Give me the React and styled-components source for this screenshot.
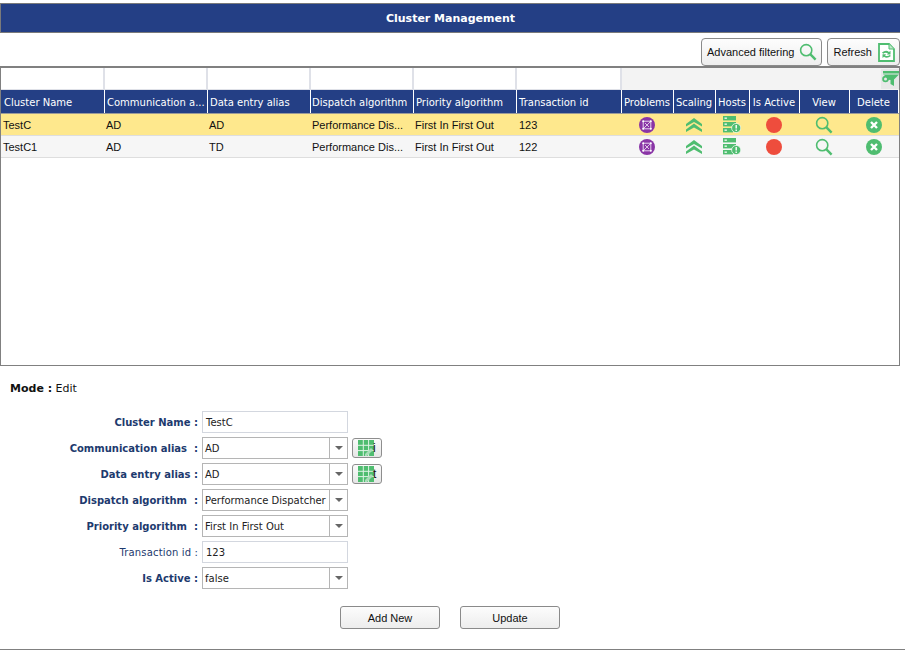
import React from 'react';
import styled, { createGlobalStyle } from 'styled-components';

const green = '#4fbd70';
const navy = '#243f85';
const columns = '104px 103px 103px 103px 103px 105px 52px 42px 34px 50px 50px 49px';

const GlobalStyle = createGlobalStyle`
	html, body {
		margin: 0;
		background: #fff;
	}
	body {
		font-family: 'Liberation Sans', Arial, sans-serif;
		overflow: hidden;
	}
`;

const Page = styled.div`
	width: 905px;
	height: 650px;
	padding-top: 3px;
	box-sizing: border-box;
	display: flex;
	flex-direction: column;
	border-bottom: 1px solid #808080;
`;

const TitleBar = styled.div`
	height: 30px;
	box-sizing: border-box;
	margin-right: 5px;
	background: ${navy};
	border: 1px solid #7a7a7a;
	border-width: 1px 0 1px 1px;
	color: #fff;
	font: bold 11px/30px 'DejaVu Sans', Verdana, sans-serif;
	text-align: center;
`;

const Toolbar = styled.div`
	height: 33px;
	padding: 5px 5px 0 0;
	box-sizing: border-box;
	display: flex;
	justify-content: flex-end;
	gap: 5px;
`;

const ToolButton = styled.div`
	height: 28px;
	box-sizing: border-box;
	padding: 0 4px 0 5px;
	display: flex;
	align-items: center;
	gap: ${(p) => p.$gap}px;
	border: 1px solid #8a8a8a;
	border-radius: 4px;
	background: linear-gradient(#fdfdfd, #eeeeee);
	font-size: 11px;
	color: #111;
`;

const Grid = styled.div`
	width: 900px;
	height: 300px;
	box-sizing: border-box;
	border: 1px solid #808080;
	border-top-width: 2px;
	background: #fff;
`;

const FilterRow = styled.div`
	display: grid;
	grid-template-columns: ${columns};
	height: 22px;
	background: #f3f3f3;
	position: relative;
`;

const FilterCell = styled.div`
	background: #fff;
	border-right: 2px solid #dfe1e8;
	border-bottom: 1px solid #dfe1e8;
	box-sizing: border-box;
`;

const FilterIcon = styled.div`
	position: absolute;
	right: 0;
	top: 1px;
	width: 18px;
	height: 20px;
	background: #e8e8e8;
	display: flex;
	align-items: center;
	justify-content: center;
`;

const HeaderRow = styled.div`
	display: grid;
	grid-template-columns: ${columns};
	height: 24px;
	border-bottom: 1px solid #9a9a9a;
	box-sizing: border-box;
`;

const HeaderCell = styled.div`
	background: ${navy};
	border-right: 1px solid #fff;
	box-sizing: border-box;
	color: #fff;
	font: 10px/26px 'DejaVu Sans', Verdana, sans-serif;
	padding-left: ${(p) => (p.$center ? 0 : `${p.$pad}px`)};
	padding-right: ${(p) => (p.$center ? '1px' : 0)};
	text-align: ${(p) => (p.$center ? 'center' : 'left')};
	white-space: nowrap;
	overflow: hidden;
`;

const Row = styled.div`
	display: grid;
	grid-template-columns: ${columns};
	height: 22px;
	box-sizing: border-box;
	border-bottom: 1px solid #dedede;
	background: ${(p) => (p.$selected ? '#fee88d' : '#f6f6f6')};
`;

const Cell = styled.div`
	font-size: 11px;
	line-height: 22px;
	color: #111;
	padding-left: ${(p) => p.$pad}px;
	white-space: nowrap;
	overflow: hidden;
`;

const IconCell = styled.div`
	display: flex;
	align-items: center;
	justify-content: center;
	padding-right: 2px;
`;

const ModeLine = styled.div`
	margin: 16px 0 0 10px;
	font: 11px/14px 'DejaVu Sans', Verdana, sans-serif;
	color: #111;
	b {
		font-weight: bold;
	}
`;

const Form = styled.div`
	margin-top: 15px;
	display: flex;
	flex-direction: column;
	gap: 4px;
`;

const FormRow = styled.div`
	display: grid;
	grid-template-columns: 198px 146px auto;
	column-gap: 4px;
	height: 22px;
	align-items: start;
`;

const Label = styled.div`
	text-align: right;
	font: ${(p) => (p.$plain ? 'normal' : 'bold')} 10px/24px 'DejaVu Sans', Verdana, sans-serif;
	letter-spacing: ${(p) => (p.$plain ? '0.15px' : 0)};
	color: #1d3a6e;
	white-space: pre;
`;

const TextBox = styled.div`
	height: 22px;
	box-sizing: border-box;
	border: 1px solid #d3d7df;
	padding-left: 3px;
	font: 10px/22px 'DejaVu Sans', Verdana, sans-serif;
	color: #222;
`;

const SelectBox = styled.div`
	height: 22px;
	box-sizing: border-box;
	border: 1px solid #b5b5b5;
	display: flex;
	font: 10px/22px 'DejaVu Sans', Verdana, sans-serif;
	color: #222;
`;

const SelectText = styled.div`
	flex: 1;
	padding-left: 2px;
	white-space: nowrap;
	overflow: hidden;
`;

const SelectArrow = styled.div`
	width: 17px;
	border-left: 1px solid #b5b5b5;
	display: flex;
	align-items: center;
	justify-content: center;
	&::before {
		content: '';
		border-style: solid;
		border-width: 4px 4px 0;
		border-color: #666 transparent transparent;
	}
`;

const LookupButton = styled.div`
	width: 30px;
	height: 20px;
	margin-top: 1px;
	box-sizing: border-box;
	border: 1px solid #8e8e8e;
	border-radius: 3px;
	background: linear-gradient(#fbfbfb, #e6e6e6);
	display: flex;
	align-items: center;
	padding-left: 5px;
	position: relative;
`;

const LookupGlyph = styled.span`
	position: absolute;
	left: 20px;
	top: 1px;
	font-size: 12px;
	line-height: 16px;
	color: #111;
`;

const Actions = styled.div`
	margin-top: 17px;
	padding-left: 340px;
	display: flex;
	gap: 20px;
`;

const ActionButton = styled.div`
	width: 100px;
	height: 23px;
	box-sizing: border-box;
	border: 1px solid #8a8a8a;
	border-radius: 3px;
	background: linear-gradient(#fcfcfc, #ededed);
	font-size: 11px;
	line-height: 22px;
	text-align: center;
	color: #111;
`;

const SearchIcon = ({ size = 18 }) => (
	<svg width={size} height={size} viewBox="0 0 18 18" fill="none" stroke={green}>
		<circle cx="7.2" cy="7.2" r="5.6" strokeWidth="1.6" />
		<path d="M11.2 11.2 L16.6 16.6" strokeWidth="2.4" />
	</svg>
);

const RefreshIcon = () => (
	<svg width="17" height="19" viewBox="0 0 17 19">
		<path d="M1 1 H11 L16 6 V18 H1 Z" fill="#fff" stroke={green} strokeWidth="1.8" />
		<path d="M11 1 V6 H16" fill="#bfe8cb" stroke={green} strokeWidth="1" />
		<path d="M4 9.5 Q8 6.5 11 9 L12.5 7.8 V11.5 H8.8 L10 10.4 Q7.5 9 5.2 10.8 Z" fill={green} />
		<path d="M13 13 Q9 16 6 13.8 L4.5 15 V11.3 H8.2 L7 12.4 Q9.5 14 11.8 12 Z" fill={green} />
	</svg>
);

const FunnelIcon = () => (
	<svg width="17" height="16" viewBox="0 0 17 16">
		<path d="M1 0 H17 V2.5 H1 Z" fill={green} />
		<path d="M1 3.5 H17 L12 8.5 V15 L8.5 13 V8.5 Z" fill={green} />
		<circle cx="3.5" cy="8" r="2.4" fill="#e8e8e8" stroke={green} strokeWidth="1.8" />
		<path d="M5.5 8 H9" stroke={green} strokeWidth="1.8" />
	</svg>
);

const ProblemsIcon = () => (
	<svg width="16" height="16" viewBox="0 0 16 16">
		<circle cx="8" cy="8" r="8" fill="#8a35a6" />
		<rect x="4.2" y="4.2" width="7.6" height="7.6" fill="none" stroke="#e6d3ee" strokeWidth="1" />
		<path d="M4.2 11.8 L11.8 4.2 M6 6 L10 10" stroke="#e6d3ee" strokeWidth="0.9" />
		<circle cx="4.2" cy="4.2" r="1" fill="#fff" />
		<circle cx="11.8" cy="4.2" r="1" fill="#fff" />
		<circle cx="4.2" cy="11.8" r="1" fill="#fff" />
		<circle cx="11.8" cy="11.8" r="1" fill="#fff" />
	</svg>
);

const ScalingIcon = () => (
	<svg width="16" height="14" viewBox="0 0 16 14" fill={green}>
		<path d="M8 0 L16 6 V8.4 L8 4 L0 8.4 V6 Z" />
		<path d="M8 5.4 L16 11.4 V14 L8 9.4 L0 14 V11.4 Z" />
	</svg>
);

const HostsIcon = () => (
	<svg width="18" height="17" viewBox="0 0 18 17">
		<rect x="0" y="0" width="13" height="4.4" fill={green} />
		<rect x="0" y="6" width="13" height="4.4" fill={green} />
		<rect x="0" y="12" width="10" height="4.4" fill={green} />
		<rect x="1.5" y="1.4" width="2.4" height="1.6" fill="#d8f0de" />
		<rect x="1.5" y="7.4" width="2.4" height="1.6" fill="#d8f0de" />
		<rect x="1.5" y="13.4" width="2.4" height="1.6" fill="#d8f0de" />
		<circle cx="13.2" cy="12" r="4.6" fill={green} stroke="#fff" strokeWidth="0.7" />
		<path d="M13.2 9 V12.6 M13.2 13.6 V15" stroke="#fff" strokeWidth="1.4" />
	</svg>
);

const ActiveIcon = () => (
	<svg width="16" height="16" viewBox="0 0 16 16">
		<circle cx="8" cy="8" r="8" fill="#ee4d3d" />
	</svg>
);

const DeleteIcon = () => (
	<svg width="16" height="16" viewBox="0 0 16 16">
		<circle cx="8" cy="8" r="8" fill={green} />
		<path d="M5 5 L11 11 M11 5 L5 11" stroke="#fff" strokeWidth="2.4" />
	</svg>
);

const TableIcon = () => (
	<svg width="16" height="16" viewBox="0 0 16 16">
		<rect width="16" height="16" fill={green} />
		<path d="M5.3 0 V16 M10.6 0 V16 M0 5.3 H16 M0 10.6 H16" stroke="#dff3e5" strokeWidth="1" />
		<path d="M7 14 L13 8 L15 10 L9 16 H7 Z" fill="#a9dcb8" />
	</svg>
);

const headers = [
	{ text: 'Cluster Name', pad: 3 },
	{ text: 'Communication a...', pad: 2 },
	{ text: 'Data entry alias', pad: 2 },
	{ text: 'Dispatch algorithm', pad: 1 },
	{ text: 'Priority algorithm', pad: 2 },
	{ text: 'Transaction id', pad: 2 },
];
const iconHeaders = ['Problems', 'Scaling', 'Hosts', 'Is Active', 'View', 'Delete'];

const rows = [
	{ name: 'TestC', comm: 'AD', entry: 'AD', id: '123', selected: true },
	{ name: 'TestC1', comm: 'AD', entry: 'TD', id: '122', selected: false },
];

const FormField = ({ label, plain, children, lookup }) => (
	<FormRow>
		<Label $plain={plain}>{label}</Label>
		{children}
		{lookup && (
			<LookupButton>
				<TableIcon />
				<LookupGlyph>{lookup}</LookupGlyph>
			</LookupButton>
		)}
	</FormRow>
);

const Select = ({ value }) => (
	<SelectBox>
		<SelectText>{value}</SelectText>
		<SelectArrow />
	</SelectBox>
);

export default function App() {
	return (
		<Page>
			<GlobalStyle />
			<TitleBar>Cluster Management</TitleBar>
			<Toolbar>
				<ToolButton $gap={5}>
					Advanced filtering
					<SearchIcon />
				</ToolButton>
				<ToolButton $gap={6}>
					Refresh
					<RefreshIcon />
				</ToolButton>
			</Toolbar>
			<Grid>
				<FilterRow>
					{headers.map((h) => (
						<FilterCell key={h.text} />
					))}
					<FilterIcon>
						<FunnelIcon />
					</FilterIcon>
				</FilterRow>
				<HeaderRow>
					{headers.map((h) => (
						<HeaderCell key={h.text} $pad={h.pad}>
							{h.text}
						</HeaderCell>
					))}
					{iconHeaders.map((h) => (
						<HeaderCell key={h} $center>
							{h}
						</HeaderCell>
					))}
				</HeaderRow>
				{rows.map((r) => (
					<Row key={r.name} $selected={r.selected}>
						<Cell $pad={2}>{r.name}</Cell>
						<Cell $pad={1}>{r.comm}</Cell>
						<Cell $pad={1}>{r.entry}</Cell>
						<Cell $pad={1}>Performance Dis...</Cell>
						<Cell $pad={1}>First In First Out</Cell>
						<Cell $pad={2}>{r.id}</Cell>
						<IconCell><ProblemsIcon /></IconCell>
						<IconCell><ScalingIcon /></IconCell>
						<IconCell><HostsIcon /></IconCell>
						<IconCell><ActiveIcon /></IconCell>
						<IconCell><SearchIcon /></IconCell>
						<IconCell><DeleteIcon /></IconCell>
					</Row>
				))}
			</Grid>
			<ModeLine>
				<b>Mode :</b> Edit
			</ModeLine>
			<Form>
				<FormField label="Cluster Name :">
					<TextBox>TestC</TextBox>
				</FormField>
				<FormField label="Communication alias  :" lookup="i">
					<Select value="AD" />
				</FormField>
				<FormField label="Data entry alias :" lookup="t">
					<Select value="AD" />
				</FormField>
				<FormField label="Dispatch algorithm  :">
					<Select value="Performance Dispatcher" />
				</FormField>
				<FormField label="Priority algorithm  :">
					<Select value="First In First Out" />
				</FormField>
				<FormField label="Transaction id :" plain>
					<TextBox>123</TextBox>
				</FormField>
				<FormField label="Is Active :">
					<Select value="false" />
				</FormField>
			</Form>
			<Actions>
				<ActionButton>Add New</ActionButton>
				<ActionButton>Update</ActionButton>
			</Actions>
		</Page>
	);
}
